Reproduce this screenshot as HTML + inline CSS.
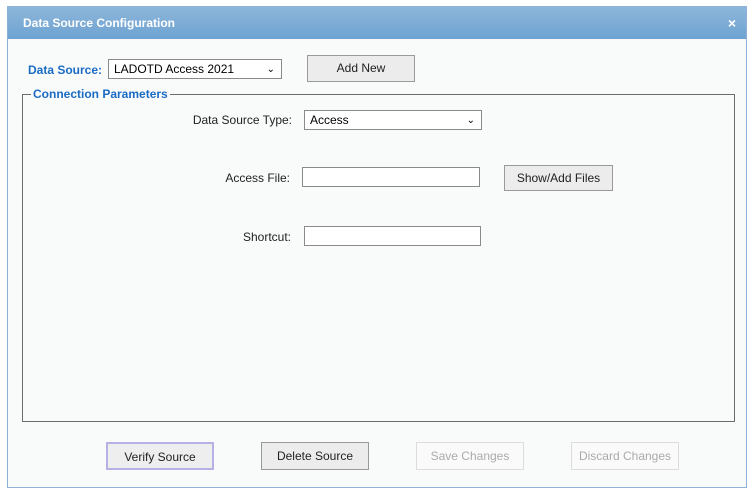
<!DOCTYPE html>
<html><head><style>
body{margin:0;width:754px;height:491px;background:#fff;font-family:"Liberation Sans",sans-serif;position:relative;overflow:hidden}
.dlg{position:absolute;left:7px;top:6px;width:738px;height:480px;border:1px solid #8fb3d6;background:#f9fbfb}
.title{position:absolute;left:0;top:0;width:738px;height:32px;background:linear-gradient(#8db6da,#6ea3d2);color:#fff;font-weight:bold;font-size:12px;line-height:32px}
.a{position:absolute;font-size:12px;color:#222;white-space:nowrap}
.r{text-align:right;width:200px}
.sel,.inp{position:absolute;background:#fff;border:1px solid #8a8a8a;height:19px;font-size:12px;line-height:19px;padding-left:5px;box-sizing:border-box}
.btn{position:absolute;background:#ececec;border:1px solid #9a9a9a;font-size:12px;text-align:center;box-sizing:border-box;color:#222}
.dis{background:#fafafa;border-color:#ddd;color:#aaa}
.fs{position:absolute;left:22px;top:94px;width:713px;height:328px;border:1px solid #6c6c6c;box-sizing:border-box}
</style></head><body>
<div class="dlg">
<div class="title"><span style="position:absolute;left:15px">Data Source Configuration</span><span style="position:absolute;right:10px;font-size:14px">×</span></div>
</div>
<div class="a" style="left:28px;top:63px;color:#1a6bc4;font-weight:bold">Data Source:</div>
<div class="sel" style="left:108px;top:59px;width:174px;height:20px">LADOTD Access 2021<span style="position:absolute;right:6px;font-size:10px">&#8964;</span></div>
<div class="btn" style="left:307px;top:55px;width:108px;height:27px;line-height:25px">Add New</div>
<div class="fs"></div>
<div class="a" style="left:31px;top:87px;color:#1a6bc4;font-weight:bold;background:#f9fbfb;padding:0 2px">Connection Parameters</div>
<div class="a r" style="left:92px;top:113px">Data Source Type:</div>
<div class="sel" style="left:304px;top:110px;width:178px;height:20px">Access<span style="position:absolute;right:6px;font-size:10px">&#8964;</span></div>
<div class="a r" style="left:90px;top:171px">Access File:</div>
<div class="inp" style="left:302px;top:167px;width:178px;height:20px"></div>
<div class="btn" style="left:504px;top:165px;width:109px;height:26px;line-height:24px">Show/Add Files</div>
<div class="a r" style="left:91px;top:230px">Shortcut:</div>
<div class="inp" style="left:304px;top:226px;width:177px;height:20px"></div>
<div class="btn" style="left:106px;top:442px;width:108px;height:28px;line-height:26px;border:2px solid #b7b0e6;background:#eeeeee">Verify Source</div>
<div class="btn" style="left:261px;top:442px;width:108px;height:28px;line-height:26px">Delete Source</div>
<div class="btn dis" style="left:416px;top:442px;width:108px;height:28px;line-height:26px">Save Changes</div>
<div class="btn dis" style="left:571px;top:442px;width:108px;height:28px;line-height:26px">Discard Changes</div>
</body></html>
